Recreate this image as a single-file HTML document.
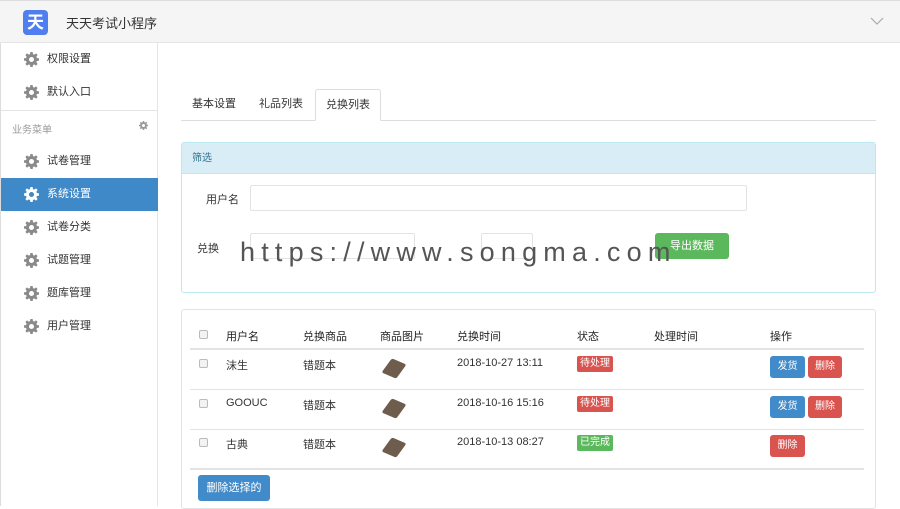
<!DOCTYPE html>
<html><head><meta charset="utf-8"><style>
*{box-sizing:border-box;margin:0;padding:0}
body{width:900px;height:506px;overflow:hidden;background:#fff;font-family:"Liberation Sans","Noto Sans CJK SC",sans-serif;font-size:11px;color:#333;position:relative}
.a{position:absolute}
.hdr{left:0;top:0;width:900px;height:43px;background:#f5f5f5;border-bottom:1px solid #e5e5e5;border-top:1px solid #ddd}
.logo{left:23px;top:10px;width:25px;height:25px;background:#4f7ef0;border-radius:4px;color:#fff;font-weight:bold;font-size:17px;text-align:center;line-height:25px}
.side{left:0;top:43px;width:158px;height:463px;border-right:1px solid #e5e5e5;border-left:1px solid #ddd}
.mi{position:absolute;left:0;width:157px;height:33px;line-height:33px;padding-left:46px;font-size:11px;color:#333}
.mi.act{background:#3f89c9;color:#fff}
.g{position:absolute;left:23px;top:9px;width:15px;height:15px}
.tab{top:89px;height:31px;line-height:31px;font-size:11px}
.pan{border:1px solid #d6e9f0;border-radius:3px}
.inp{border:1px solid #e3e3e3;border-radius:2px;background:#fff}
.btn{color:#fff;border-radius:3px;text-align:center;font-size:10px}
.lab{color:#fff;border-radius:2px;font-size:10px;padding:0 3px;height:16px;line-height:16px}
.cb{width:9px;height:9px;border:1px solid #bbb;border-radius:2px;background:#f3f3f3}
.img{width:22px;height:18px;background:#6e5c4d;transform:skew(-20deg) rotate(20deg);border-radius:2px}
.line{height:1px;background:#e3e3e3}
.th{top:328px;color:#222}
</style></head><body>
<div class="a hdr"></div>
<div class="a logo">天</div>
<div class="a" style="left:66px;top:13px;font-size:13px;color:#333">天天考试小程序</div>
<svg class="a" style="left:870px;top:16px" width="14" height="10"><path d="M1 2 L7 8 L13 2" stroke="#aaa" fill="none" stroke-width="1.2"/></svg>
<div class="a side">
<svg width="0" height="0" style="position:absolute"><defs><symbol id="gear" viewBox="0 0 16 16"><path d="M6.8 0h2.4l.4 2.2 1.3.6 1.9-1.3 1.7 1.7-1.3 1.9.6 1.3 2.2.4v2.4l-2.2.4-.6 1.3 1.3 1.9-1.7 1.7-1.9-1.3-1.3.6-.4 2.2H6.8l-.4-2.2-1.3-.6-1.9 1.3-1.7-1.7 1.3-1.9-.6-1.3L0 9.2V6.8l2.2-.4.6-1.3-1.3-1.9 1.7-1.7 1.9 1.3 1.3-.6zM8 5.3A2.7 2.7 0 1 0 8 10.7 2.7 2.7 0 1 0 8 5.3z" fill-rule="evenodd"/></symbol></defs></svg>
<div class="mi" style="top:0"><svg class="g" fill="#8a8a8a"><use href="#gear"/></svg>权限设置</div>
<div class="mi" style="top:33px"><svg class="g" fill="#8a8a8a"><use href="#gear"/></svg>默认入口</div>
<div class="a line" style="left:0;top:67px;width:157px"></div>
<div class="a" style="left:11px;top:78px;color:#999;font-size:10px">业务菜单</div>
<svg class="a" style="left:138px;top:78px" width="9" height="9" fill="#999"><use href="#gear"/></svg>
<div class="mi" style="top:102px"><svg class="g" fill="#8a8a8a"><use href="#gear"/></svg>试卷管理</div>
<div class="mi act" style="top:135px"><svg class="g" fill="#fff"><use href="#gear"/></svg>系统设置</div>
<div class="mi" style="top:168px"><svg class="g" fill="#8a8a8a"><use href="#gear"/></svg>试卷分类</div>
<div class="mi" style="top:201px"><svg class="g" fill="#8a8a8a"><use href="#gear"/></svg>试题管理</div>
<div class="mi" style="top:234px"><svg class="g" fill="#8a8a8a"><use href="#gear"/></svg>题库管理</div>
<div class="mi" style="top:267px"><svg class="g" fill="#8a8a8a"><use href="#gear"/></svg>用户管理</div>
</div>
<div class="a tab" style="left:192px">基本设置</div>
<div class="a tab" style="left:259px">礼品列表</div>
<div class="a" style="left:181px;top:120px;width:695px;height:1px;background:#ddd"></div>
<div class="a tab" style="left:315px;width:66px;height:32px;border:1px solid #ddd;border-bottom:1px solid #fff;background:#fff;text-align:center;border-radius:3px 3px 0 0">兑换列表</div>
<div class="a pan" style="left:181px;top:142px;width:695px;height:151px;border-color:#bce8f1"></div>
<div class="a" style="left:182px;top:143px;width:693px;height:31px;background:#d9edf7;border-bottom:1px solid #bce8f1;color:#31708f;line-height:31px;padding-left:10px;font-size:10px">筛选</div>
<div class="a" style="left:206px;top:191px">用户名</div>
<div class="a inp" style="left:250px;top:185px;width:497px;height:26px"></div>
<div class="a" style="left:197px;top:240px">兑换</div>
<div class="a inp" style="left:250px;top:233px;width:165px;height:26px"></div>
<div class="a inp" style="left:481px;top:233px;width:52px;height:26px"></div>
<div class="a btn" style="left:655px;top:233px;width:74px;height:26px;line-height:26px;background:#5cb85c;font-size:11px">导出数据</div>
<div class="a" style="left:240px;top:236px;font-size:27px;letter-spacing:6.2px;color:#555;font-family:'Liberation Sans',sans-serif;line-height:32px;white-space:nowrap">https://www.songma.com</div>
<div class="a pan" style="left:181px;top:309px;width:695px;height:200px;border-color:#e3e3e3"></div>
<div class="a cb" style="left:199px;top:330px"></div>
<div class="a th" style="left:226px">用户名</div>
<div class="a th" style="left:303px">兑换商品</div>
<div class="a th" style="left:380px">商品图片</div>
<div class="a th" style="left:457px">兑换时间</div>
<div class="a th" style="left:577px">状态</div>
<div class="a th" style="left:654px">处理时间</div>
<div class="a th" style="left:770px">操作</div>
<div class="a line" style="left:190px;top:348px;width:674px;height:2px"></div>
<div class="a line" style="left:190px;top:389px;width:674px"></div>
<div class="a line" style="left:190px;top:429px;width:674px"></div>
<div class="a line" style="left:190px;top:468px;width:674px;height:2px"></div>

<div class="a cb" style="left:199px;top:359px"></div>
<div class="a" style="left:226px;top:357px">沫生</div>
<div class="a" style="left:303px;top:357px">错题本</div>
<div class="a img" style="left:385px;top:361px;width:18px;height:15px"></div>
<div class="a" style="left:457px;top:357px">2018-10-27 13:11</div>
<div class="a lab" style="left:577px;top:356px;background:#d9534f">待处理</div>
<div class="a btn" style="left:770px;top:356px;width:35px;height:22px;line-height:22px;background:#428bca">发货</div>
<div class="a btn" style="left:808px;top:356px;width:34px;height:22px;line-height:22px;background:#d9534f">删除</div>

<div class="a cb" style="left:199px;top:399px"></div>
<div class="a" style="left:226px;top:397px">GOOUC</div>
<div class="a" style="left:303px;top:397px">错题本</div>
<div class="a img" style="left:385px;top:401px;width:18px;height:15px"></div>
<div class="a" style="left:457px;top:397px">2018-10-16 15:16</div>
<div class="a lab" style="left:577px;top:396px;background:#d9534f">待处理</div>
<div class="a btn" style="left:770px;top:396px;width:35px;height:22px;line-height:22px;background:#428bca">发货</div>
<div class="a btn" style="left:808px;top:396px;width:34px;height:22px;line-height:22px;background:#d9534f">删除</div>

<div class="a cb" style="left:199px;top:438px"></div>
<div class="a" style="left:226px;top:436px">古典</div>
<div class="a" style="left:303px;top:436px">错题本</div>
<div class="a img" style="left:385px;top:440px;width:18px;height:15px"></div>
<div class="a" style="left:457px;top:436px">2018-10-13 08:27</div>
<div class="a lab" style="left:577px;top:435px;background:#5cb85c">已完成</div>
<div class="a btn" style="left:770px;top:435px;width:35px;height:22px;line-height:22px;background:#d9534f">删除</div>

<div class="a btn" style="left:198px;top:475px;width:72px;height:26px;line-height:26px;background:#428bca;font-size:11px">删除选择的</div>
</body></html>
